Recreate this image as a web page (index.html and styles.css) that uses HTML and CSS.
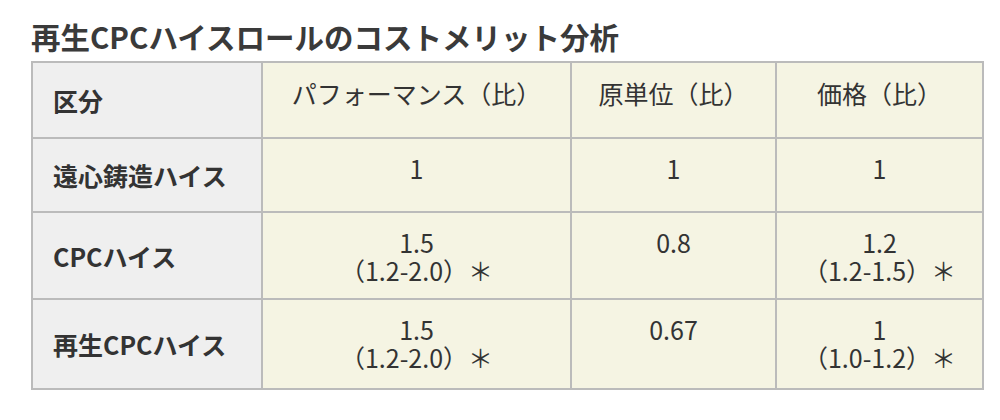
FILE: index.html
```html
<!DOCTYPE html>
<html lang="ja">
<head>
<meta charset="utf-8">
<link rel="stylesheet" href="styles.css">
</head>
<body>
<div class="wrap">
  <h2 class="title">再生CPCハイスロールのコストメリット分析</h2>
  <table class="cost">
    <colgroup>
      <col class="c1"><col class="c2"><col class="c3"><col class="c4">
    </colgroup>
    <tr class="head">
      <th class="rowhead">区分</th>
      <td>パフォーマンス（比）</td>
      <td>原単位（比）</td>
      <td>価格（比）</td>
    </tr>
    <tr>
      <th class="rowhead">遠心鋳造ハイス</th>
      <td>1</td>
      <td>1</td>
      <td>1</td>
    </tr>
    <tr>
      <th class="rowhead">CPCハイス</th>
      <td>1.5<br>（1.2-2.0）＊</td>
      <td>0.8</td>
      <td>1.2<br>（1.2-1.5）＊</td>
    </tr>
    <tr class="last">
      <th class="rowhead">再生CPCハイス</th>
      <td>1.5<br>（1.2-2.0）＊</td>
      <td>0.67</td>
      <td>1<br>（1.0-1.2）＊</td>
    </tr>
  </table>
</div>
</body>
</html>
```
FILE: styles.css
```css
html, body {
  margin: 0;
  padding: 0;
  background: #fff;
}
body {
  font-family: "Noto Sans CJK JP", "Noto Sans", sans-serif;
  color: #333;
}
.wrap {
  padding: 0 18px 0 31px;
}
.title {
  margin: 16px 0 5px 0;
  font-size: 29.5px;
  line-height: 40px;
  font-weight: bold;
  color: #3a3a3a;
}
.cost {
  border-collapse: collapse;
  width: 951px;
  table-layout: fixed;
  border: 2px solid #bbb;
}
.c1 { width: 230px; }
.c2 { width: 309px; }
.c3 { width: 205px; }
.c4 { width: 207px; }
.cost th, .cost td {
  border: 2px solid #bbb;
  font-size: 25px;
  line-height: 28px;
}
.cost td {
  background: #f5f4e3;
  text-align: center;
  vertical-align: top;
  padding: 15px 8px 14px;
  font-weight: normal;
}
.cost .rowhead {
  background: #efefef;
  text-align: left;
  vertical-align: middle;
  font-weight: bold;
  padding: 22px 6px 22px 20px;
  white-space: nowrap;
}
.cost .head td {
  padding-top: 16px;
}
.cost .head .rowhead {
  padding-top: 23px;
  padding-bottom: 23px;
}
.cost .last td {
  padding-bottom: 17px;
}
```
